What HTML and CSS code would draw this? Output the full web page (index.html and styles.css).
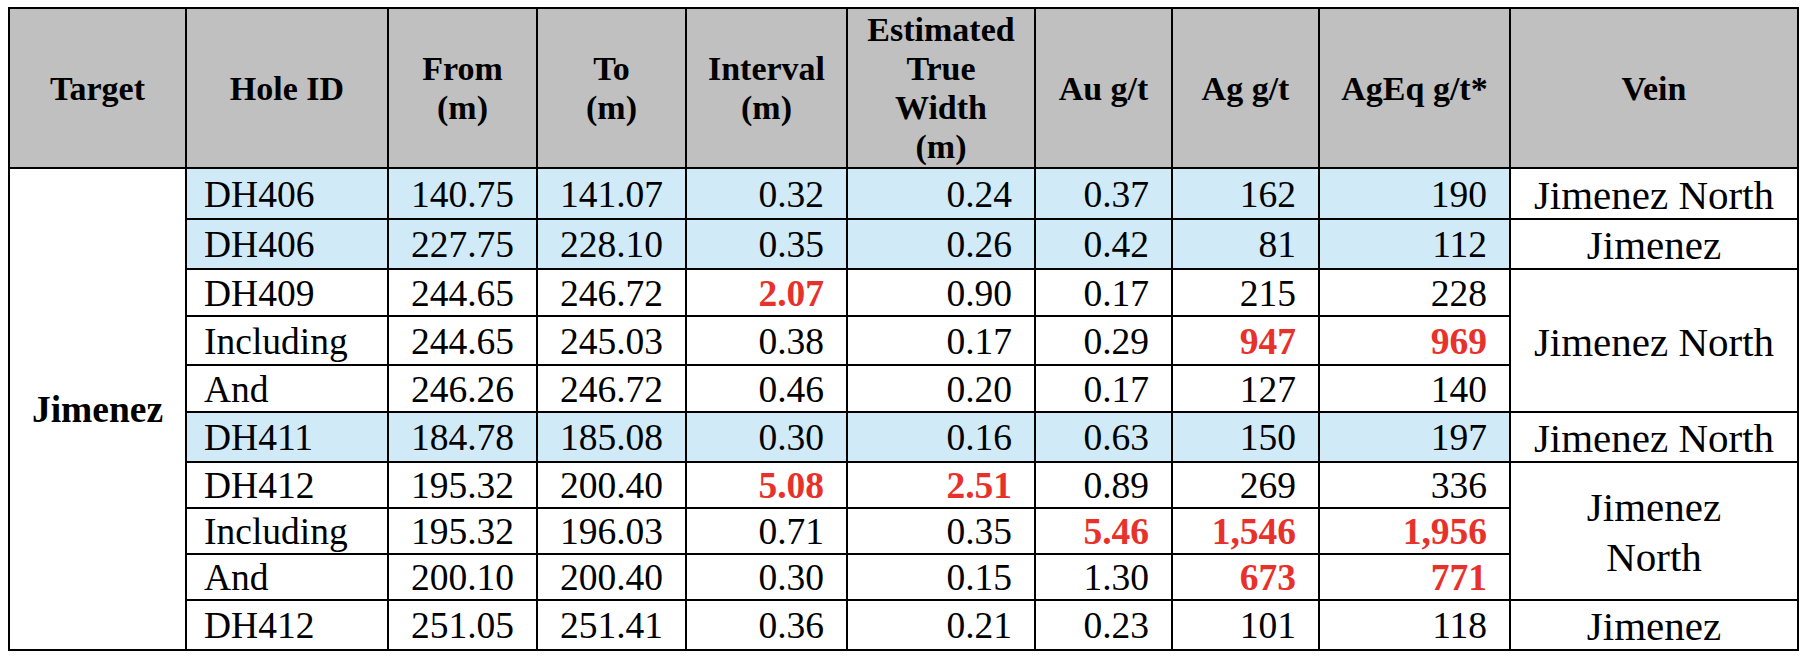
FILE: index.html
```html
<!DOCTYPE html>
<html>
<head>
<meta charset="utf-8">
<link rel="stylesheet" href="styles.css">
</head>
<body>
<table class="results">
  <colgroup>
    <col class="c-target"><col class="c-hole"><col class="c-from"><col class="c-to"><col class="c-int"><col class="c-etw"><col class="c-au"><col class="c-ag"><col class="c-ageq"><col class="c-vein">
  </colgroup>
  <thead>
    <tr class="head">
      <th>Target</th>
      <th>Hole ID</th>
      <th>From<br>(m)</th>
      <th>To<br>(m)</th>
      <th>Interval<br>(m)</th>
      <th>Estimated<br>True<br>Width<br>(m)</th>
      <th>Au g/t</th>
      <th>Ag g/t</th>
      <th>AgEq g/t*</th>
      <th>Vein</th>
    </tr>
  </thead>
  <tbody>
    <tr class="r51 blue">
      <td class="target" rowspan="10">Jimenez</td>
      <td class="hole">DH406</td><td class="mid">140.75</td><td class="mid">141.07</td><td class="num">0.32</td><td class="num">0.24</td><td class="num">0.37</td><td class="num">162</td><td class="num">190</td>
      <td class="vein">Jimenez North</td>
    </tr>
    <tr class="r50 blue">
      <td class="hole">DH406</td><td class="mid">227.75</td><td class="mid">228.10</td><td class="num">0.35</td><td class="num">0.26</td><td class="num">0.42</td><td class="num">81</td><td class="num">112</td>
      <td class="vein">Jimenez</td>
    </tr>
    <tr class="r47">
      <td class="hole">DH409</td><td class="mid">244.65</td><td class="mid">246.72</td><td class="num hi">2.07</td><td class="num">0.90</td><td class="num">0.17</td><td class="num">215</td><td class="num">228</td>
      <td class="vein" rowspan="3">Jimenez North</td>
    </tr>
    <tr class="r49">
      <td class="hole">Including</td><td class="mid">244.65</td><td class="mid">245.03</td><td class="num">0.38</td><td class="num">0.17</td><td class="num">0.29</td><td class="num hi">947</td><td class="num hi">969</td>
    </tr>
    <tr class="r47">
      <td class="hole">And</td><td class="mid">246.26</td><td class="mid">246.72</td><td class="num">0.46</td><td class="num">0.20</td><td class="num">0.17</td><td class="num">127</td><td class="num">140</td>
    </tr>
    <tr class="r50 blue">
      <td class="hole">DH411</td><td class="mid">184.78</td><td class="mid">185.08</td><td class="num">0.30</td><td class="num">0.16</td><td class="num">0.63</td><td class="num">150</td><td class="num">197</td>
      <td class="vein">Jimenez North</td>
    </tr>
    <tr class="r46">
      <td class="hole">DH412</td><td class="mid">195.32</td><td class="mid">200.40</td><td class="num hi">5.08</td><td class="num hi">2.51</td><td class="num">0.89</td><td class="num">269</td><td class="num">336</td>
      <td class="vein two" rowspan="3">Jimenez<br>North</td>
    </tr>
    <tr class="r45">
      <td class="hole">Including</td><td class="mid">195.32</td><td class="mid">196.03</td><td class="num">0.71</td><td class="num">0.35</td><td class="num hi">5.46</td><td class="num hi">1,546</td><td class="num hi">1,956</td>
    </tr>
    <tr class="r46">
      <td class="hole">And</td><td class="mid">200.10</td><td class="mid">200.40</td><td class="num">0.30</td><td class="num">0.15</td><td class="num">1.30</td><td class="num hi">673</td><td class="num hi">771</td>
    </tr>
    <tr class="r50">
      <td class="hole">DH412</td><td class="mid">251.05</td><td class="mid">251.41</td><td class="num">0.36</td><td class="num">0.21</td><td class="num">0.23</td><td class="num">101</td><td class="num">118</td>
      <td class="vein">Jimenez</td>
    </tr>
  </tbody>
</table>
</body>
</html>
```

FILE: styles.css
```css
html, body {
  margin: 0;
  padding: 0;
  background: #ffffff;
}

body {
  padding: 7px 0 0 8px;
  font-family: "Liberation Serif", "Times New Roman", Tinos, Times, "Nimbus Roman", "FreeSerif", "DejaVu Serif", serif;
  color: #000000;
}

.results {
  border-collapse: collapse;
  table-layout: fixed;
  width: 1791px;
  font-family: "Liberation Serif", "Times New Roman", Tinos, Times, "Nimbus Roman", "FreeSerif", "DejaVu Serif", serif;
  font-size: 37.5px;
}

.c-target { width: 177px; }
.c-hole { width: 202px; }
.c-from { width: 149px; }
.c-to { width: 149px; }
.c-int { width: 161px; }
.c-etw { width: 188px; }
.c-au { width: 137px; }
.c-ag { width: 147px; }
.c-ageq { width: 191px; }
.c-vein { width: 288px; }

.results th,
.results td {
  border: 2px solid #000000;
  padding: 0;
  white-space: nowrap;
  overflow: hidden;
  font-family: "Liberation Serif", "Times New Roman", Tinos, Times, "Nimbus Roman", "FreeSerif", "DejaVu Serif", serif;
}

.head {
  height: 160px;
}

.results th {
  background: #c0c0c0;
  font-size: 34px;
  line-height: 39px;
  font-weight: bold;
  text-align: center;
  vertical-align: middle;
}

.results td {
  vertical-align: middle;
  line-height: 42px;
  padding-top: 2px;
}

.r45 { height: 45px; }
.r46 { height: 46px; }
.r47 { height: 47px; }
.r49 { height: 49px; }
.r50 { height: 50px; }
.r51 { height: 51px; }

.blue td {
  background: #d0eaf7;
}

.blue td.target,
.blue td.vein {
  background: #ffffff;
}

.target {
  font-weight: bold;
  text-align: center;
}

.hole {
  text-align: left;
  padding-left: 17px !important;
}

.mid {
  text-align: center;
}

.num {
  text-align: right;
  padding-right: 22px !important;
}

.hi {
  color: #e8312a;
  font-weight: bold;
}

.vein {
  text-align: center;
  font-size: 41px;
}

.vein.two {
  line-height: 50px;
}
```
